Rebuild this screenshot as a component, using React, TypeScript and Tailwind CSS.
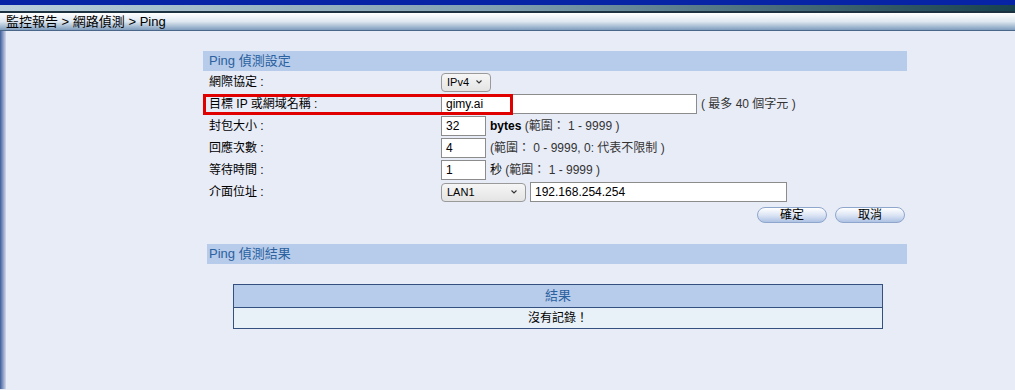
import React from 'react'

const font = { fontFamily: '"Liberation Sans", "Noto Sans CJK TC", sans-serif' }

function Chevron() {
  return (
    <svg width="8" height="6" viewBox="0 0 8 6" className="shrink-0">
      <path d="M1.5 1.5 L4 4 L6.5 1.5" fill="none" stroke="#333" strokeWidth="1.1" />
    </svg>
  )
}

function Select({ value, width }: { value: string; width: string }) {
  return (
    <div
      className={`${width} h-[19px] flex items-center justify-between rounded-[4px] border border-[#9a9a9a] bg-gradient-to-b from-[#f6f6f6] to-[#e4e4e4] pl-[5px] pr-[7px] text-[11px] text-black`}
    >
      <span>{value}</span>
      <Chevron />
    </div>
  )
}

function Input({ value, width }: { value: string; width: string }) {
  return (
    <div className={`${width} h-[20px] flex items-center border border-[#8c8c8c] bg-white pl-[4px] text-[12px] text-black`}>
      {value}
    </div>
  )
}

function Row({ label, children, highlight }: { label: string; children: React.ReactNode; highlight?: boolean }) {
  return (
    <div className="relative flex items-center h-[22px]">
      <div className="w-[238px] pl-[6px] text-[12px] text-black shrink-0">{label}</div>
      <div className="flex items-center gap-[4px]">{children}</div>
      {highlight && (
        <div className="absolute left-0 top-[1px] w-[310px] h-[21px] border-[3px] border-[#e00000] pointer-events-none" />
      )}
    </div>
  )
}

function PillButton({ label }: { label: string }) {
  return (
    <div className="w-[70px] h-[16px] flex items-center justify-center rounded-full border border-[#8fa6cc] bg-gradient-to-b from-[#ffffff] via-[#dde6f5] to-[#aec2e4] text-[12px] text-black">
      {label}
    </div>
  )
}

export default function App() {
  return (
    <div className="w-[1015px] h-[390px] overflow-hidden bg-[#e8ecf7]" style={font}>
      {/* 頂部標題列 */}
      <div className="h-[5px] bg-[#0724a6]" />
      <div className="h-[6px] bg-gradient-to-r from-[#b9cfdc] via-[#7f9fb0] to-[#18424f]" />
      <div className="h-[2px] bg-[#1d3240]" />
      <div className="h-[18px] flex items-center pl-[6px] bg-gradient-to-b from-[#ffffff] via-[#dfe8f0] to-[#7f9dbd] text-[13px] text-black border-b border-[#4a6688]">
        監控報告 &gt; 網路偵測 &gt; Ping
      </div>

      <div className="flex h-[358px]">
        <div className="w-[6px] bg-gradient-to-r from-[#3c5e9c] via-[#8a9cc4] to-[#d4d9ea] shrink-0" />

        <div className="flex-1 pt-[20px]">
          <div className="ml-[197px] w-[704px]">
            {/* Ping 偵測設定 */}
            <div className="h-[20px] flex items-center pl-[6px] bg-[#b7cbea] text-[13px] text-[#2b629f]">
              Ping 偵測設定
            </div>

            <Row label="網際協定 :">
              <Select value="IPv4" width="w-[50px]" />
            </Row>
            <Row label="目標 IP 或網域名稱 :" highlight>
              <Input value="gimy.ai" width="w-[256px]" />
              <span className="text-[12px] text-[#333]">( 最多 40 個字元 )</span>
            </Row>
            <Row label="封包大小 :">
              <Input value="32" width="w-[45px]" />
              <span className="text-[12px] text-[#333]">
                <b className="text-black">bytes</b> (範圍： 1 - 9999 )
              </span>
            </Row>
            <Row label="回應次數 :">
              <Input value="4" width="w-[45px]" />
              <span className="text-[12px] text-[#333]">(範圍： 0 - 9999, 0: 代表不限制 )</span>
            </Row>
            <Row label="等待時間 :">
              <Input value="1" width="w-[45px]" />
              <span className="text-[12px] text-[#333]">
                <span className="text-black">秒</span> (範圍： 1 - 9999 )
              </span>
            </Row>
            <Row label="介面位址 :">
              <Select value="LAN1" width="w-[85px]" />
              <Input value="192.168.254.254" width="w-[257px]" />
            </Row>

            <div className="flex justify-end gap-[8px] pt-[4px] pr-[2px]">
              <PillButton label="確定" />
              <PillButton label="取消" />
            </div>

            {/* Ping 偵測結果 */}
            <div className="mt-[21px] ml-[4px] h-[20px] flex items-center pl-[2px] bg-[#b7cbea] text-[13px] text-[#2b629f]">
              Ping 偵測結果
            </div>

            <div className="mt-[20px] ml-[30px] w-[650px] border border-[#33507e]">
              <div className="h-[23px] flex items-center justify-center bg-[#b7cbea] text-[13px] text-[#2b629f] border-b border-[#33507e]">
                結果
              </div>
              <div className="h-[20px] flex items-center justify-center bg-[#e8f0f8] text-[12px] text-black">
                沒有記錄！
              </div>
            </div>
          </div>
        </div>
      </div>
    </div>
  )
}
